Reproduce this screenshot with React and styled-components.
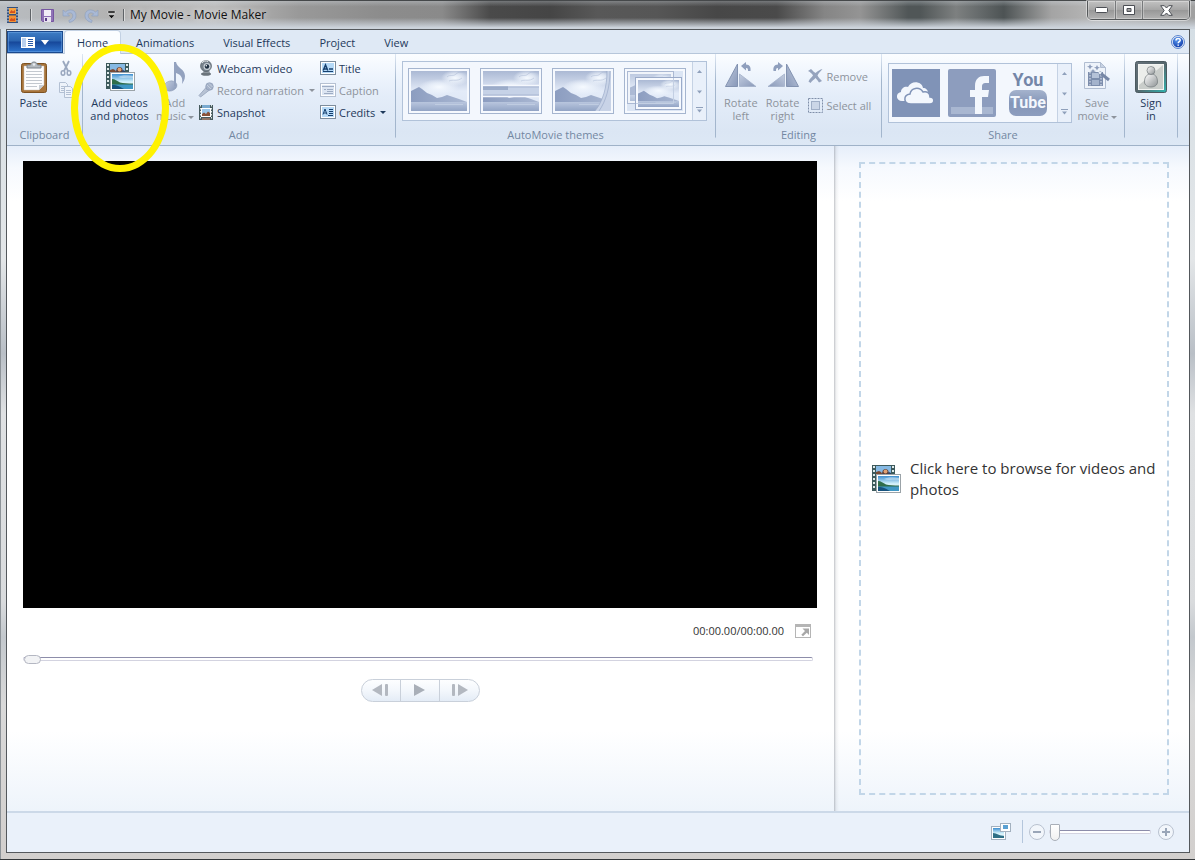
import React from 'react'
import styled, { createGlobalStyle, css } from 'styled-components'

const GlobalStyle = createGlobalStyle`
  * {
    box-sizing: border-box;
  }
  body {
    margin: 0;
    background: #c9cdd1;
    font-family: 'Open Sans', 'Noto Sans', sans-serif;
    font-size: 11px;
    line-height: 13px;
    color: #1e395b;
  }
  button {
    font: inherit;
    color: inherit;
    background: none;
    border: 0;
    padding: 0;
  }
  svg {
    display: block;
    flex: none;
  }
`

const Window = styled.div`
  display: flex;
  flex-direction: column;
  min-height: 100vh;
  padding: 0 5px 7px 6px;
  border: solid #45484a;
  border-width: 1px 0 0;
  background:
    linear-gradient(#34373a, #34373a) bottom / 100% 1px no-repeat,
    linear-gradient(to right, #8d9398 0, #8d9398 1px, transparent 1px),
    linear-gradient(#d3dde4 0, #e3e6e8 30%, #b9bfc6 41%, #dfe1e3 48%, #d9dbdd 70%, #c3c8cd 74%, #d9d9d9 82%, #d2cfcd 100%);
`

/* title bar */

const TitleBar = styled.header`
  display: flex;
  justify-content: space-between;
  height: 28px;
  margin: 0 -5px 0 -6px;
  padding-left: 6px;
  background:
    linear-gradient(rgba(220, 228, 236, 0.3) 0, rgba(220, 228, 236, 0) 20%, rgba(205, 213, 221, 0) 60%, #ccd3db 95%),
    linear-gradient(
      to right,
      #b8bcc0 0, #b3b3b3 9%, #bdbdbd 18%, #999 25%, #8c8c8c 32%, #8a8a8a 37%,
      #4a4a4a 41%, #454545 46%, #585858 50%, #565656 55%, #474747 60%, #4a4a4a 65%, #858585 69%,
      #949494 72%, #505657 76%, #505657 77%, #7d8080 80%, #656a6b 82%, #4d5354 84%, #a4a4a4 88%, #b9b9b9 92%, #a0a0a0 100%
    );
`

const QuickAccess = styled.div`
  display: flex;
  align-items: center;
  gap: 6px;
  color: #111;
`

const QuickButton = styled.button`
  display: flex;
  align-items: center;
  justify-content: center;
  width: ${(p) => (p.$narrow ? 12 : 16)}px;
  height: 16px;
`

const Divider = styled.span`
  width: 1px;
  height: 12px;
  margin: ${(p) => (p.$wide ? '0 2px 0 5px' : '0')};
  background: #5f6367;
  box-shadow: 1px 0 0 rgba(255, 255, 255, 0.5);
`

const Title = styled.h1`
  margin: 0;
  font-size: 12px;
  font-weight: 400;
  line-height: 16px;
  text-shadow: 0 0 6px rgba(255, 255, 255, 0.8);
`

const CaptionButtons = styled.div`
  display: flex;
  align-self: flex-start;
  margin-right: 5px;
  border: 1px solid #55585a;
  border-top: 0;
  border-radius: 0 0 5px 5px;
  box-shadow: 0 0 0 1px rgba(255, 255, 255, 0.45);
  background: linear-gradient(#c2c2c2, #a5a5a5 50%, #979797 50%, #b2b2b2);
`

const CaptionButton = styled.button`
  display: flex;
  align-items: center;
  justify-content: center;
  width: ${(p) => (p.$wide ? 47 : 27)}px;
  height: 18px;
  box-shadow: inset 0 0 0 1px rgba(255, 255, 255, 0.3);

  & + & {
    border-left: 1px solid #77797b;
  }
`

const Client = styled.div`
  flex: 1;
  display: flex;
  flex-direction: column;
  border: 1px solid #54585c;
  background: #fff;
`

/* ribbon */

const TabBar = styled.nav`
  display: flex;
  align-items: flex-end;
  height: 24px;
  background: #dfe9f5;
  border-bottom: 1px solid #b6c6da;
  padding-right: 4px;
`

const FileButton = styled.button`
  display: flex;
  align-items: center;
  justify-content: center;
  gap: 6px;
  width: 56px;
  height: 22px;
  border: 1px solid #1b4a8e;
  background: linear-gradient(#3d7cc4 0, #2a64b0 45%, #16479a 50%, #2e74cc 100%);
  box-shadow: inset 0 0 0 1px rgba(120, 175, 235, 0.45);
  margin-right: 2px;
`

const Tab = styled.button`
  height: 23px;
  padding: 0 12px;
  margin: 0 5px -1px 0;

  ${(p) =>
    p.$active &&
    css`
      margin-right: 4px;
      background: #fbfdff;
      border-radius: 3px 3px 0 0;
      box-shadow: 0 0 0 1px #c3d1e3;
      clip-path: inset(-1px -1px 0 -1px);
    `}
`

const HelpButton = styled.button`
  margin: 0 0 4px auto;
`

const Ribbon = styled.div`
  display: flex;
  height: 92px;
  background: linear-gradient(#fbfdff 0, #eff5fd 22%, #e4edf9 45%, #dbe6f4 85%, #dde8f5 100%);
  border-bottom: 1px solid #9fb2c8;
`

const GroupBox = styled.section`
  display: flex;
  flex-direction: column;
  justify-content: space-between;
  width: ${(p) => p.$width}px;
  padding: 3px 4px;
  border-right: 1px solid;
  border-image: linear-gradient(#dfe8f4 0, #a3b6cd 30%, #a3b6cd 90%, transparent 92%) 1;
`

const GroupContent = styled.div`
  display: flex;
  align-items: flex-start;
  gap: ${(p) => p.$gap || 0}px;
  height: 68px;
`

const GroupLabel = styled.h2`
  margin: 0;
  font-size: 11px;
  font-weight: 400;
  line-height: 14px;
  text-align: center;
  color: #7387a2;
`

const LargeButton = styled.button`
  position: relative;
  display: flex;
  flex-direction: column;
  align-items: center;
  gap: 3px;
  width: ${(p) => p.$width}px;
  padding-top: 4px;
  white-space: nowrap;
  color: ${(p) => (p.disabled ? '#8d939c' : '#1e395b')};
`

const Highlight = styled.span`
  position: absolute;
  z-index: 2;
  top: -13px;
  left: 50%;
  width: 98px;
  height: 128px;
  margin-left: -49px;
  border: 7px solid #fff200;
  border-radius: 50%;
  pointer-events: none;
`

const SmallColumn = styled.div`
  display: flex;
  flex-direction: column;
  align-items: flex-start;
  gap: ${(p) => (p.$spread ? 7 : 0)}px;
  padding: ${(p) => (p.$spread ? '8px 0 0 5px' : '0')};
  width: ${(p) => p.$width}px;
`

const SmallButton = styled.button`
  display: flex;
  align-items: center;
  gap: 3px;
  height: 22px;
  white-space: nowrap;
  color: ${(p) => (p.disabled ? '#8d939c' : '#1e395b')};
`

const Arrow = styled.i`
  display: inline-block;
  vertical-align: middle;
  margin-left: 2px;
  border: 3px solid transparent;
  border-top-color: currentColor;
  border-bottom: 0;
`

const Gallery = styled.div`
  display: flex;
  margin: ${(p) => (p.$low ? 6 : 4)}px 0 0 2px;
  height: 60px;
  border: 1px solid #b1c2d9;
  background: #f3f7fd;
`

const GalleryItems = styled.div`
  display: flex;
  align-items: center;
  gap: ${(p) => (p.$roomy ? 10 : 8)}px;
  padding: ${(p) => (p.$roomy ? '0 6px 0 5px' : '0 5px 0 3px')};
`

const GalleryItem = styled.button`
  ${(p) =>
    p.$framed &&
    css`
      border: 1px solid #a5b5cf;
      padding: 2px;
      background: #f6f9fe;
    `}
`

const GalleryScroll = styled.div`
  display: flex;
  flex-direction: column;
  width: 14px;
  border-left: 1px solid #c5d2e4;
  background: #e9f0fa;

  button {
    flex: 1;
    display: flex;
    align-items: center;
    justify-content: center;
  }
`

/* workspace */

const Workspace = styled.main`
  flex: 1;
  display: grid;
  grid-template-columns: minmax(0, 1fr) 355px;
  background: linear-gradient(#e6eefa 0, #f6f9fe 22px, #fff 55px, #fff calc(100% - 80px), #eef4fb 100%);
`

const Preview = styled.section`
  padding: 15px 17px 0 16px;
`

const Screen = styled.div`
  aspect-ratio: 16 / 9;
  background: #000;
`

const TimeRow = styled.div`
  display: flex;
  align-items: center;
  justify-content: flex-end;
  gap: 11px;
  height: 20px;
  margin: 13px 6px 0 0;
  color: #333;
`

const seekThumb = css`
  width: 17px;
  height: 9px;
  margin-top: -3px;
  border: 1px solid #b4b7c2;
  border-radius: 5px;
  background: #f2f3f5;
`

const zoomThumb = css`
  width: 10px;
  height: 17px;
  margin-top: -7px;
  background: linear-gradient(#fff, #f1f1f1);
  border: 1px solid #a9afb8;
  border-radius: 1px 1px 5px 5px;
`

const Slider = styled.input`
  display: block;
  appearance: none;
  width: ${(p) => (p.$zoom ? '102px' : '100%')};
  height: 18px;
  margin: 0;
  background: none;

  &::-webkit-slider-runnable-track {
    height: 4px;
    border: 1px solid #d3d3e0;
    border-top-color: #8d8daa;
    border-radius: 2px;
    background: #fff;
  }
  &::-webkit-slider-thumb {
    appearance: none;
    ${(p) => (p.$zoom ? zoomThumb : seekThumb)}
  }
`

const SeekRow = styled.div`
  padding: 9px 4px 0 0;
`

const Transport = styled.div`
  display: flex;
  width: 119px;
  height: 23px;
  margin: 11px auto 0;
  border: 1px solid #c9d0da;
  border-radius: 12px;
  background: linear-gradient(#fdfeff, #f3f7fc 50%, #e4ecf6);
`

const TransportButton = styled.button`
  flex: 1;
  display: flex;
  align-items: center;
  justify-content: center;

  & + & {
    border-left: 1px solid #c9d0da;
  }
`

const Storyboard = styled.section`
  display: flex;
  padding: 16px 20px 16px 25px;
  background: linear-gradient(to right, rgba(120, 125, 135, 0.45) 0, rgba(120, 125, 135, 0.1) 2px, transparent 5px);
`

const DropZone = styled.button`
  flex: 1;
  display: flex;
  align-items: center;
  gap: 9px;
  padding: 0 10px;
  border: 2px dashed #c2d6e8;
  font-size: 15px;
  line-height: 21px;
  text-align: left;
  color: #333;
`

const StatusBar = styled.footer`
  display: flex;
  align-items: center;
  justify-content: flex-end;
  height: 41px;
  padding: 0 15px 2px;
  border-top: 2px solid #ccd9e8;
  background: #eaf1fa;
`

const StatusDivider = styled.span`
  width: 1px;
  height: 23px;
  margin: 0 6px 0 11px;
  background: #b4c6dc;
`

const RoundButton = styled.button`
  display: flex;
  align-items: center;
  justify-content: center;
  width: 16px;
  height: 16px;
  margin: ${(p) => (p.$end ? '0 0 0 7px' : '0 4px 0 0')};
  border: 1px solid #b9c2d0;
  border-radius: 50%;
  background: #f2f6fb;
`

/* icons */

const GradientSheet = styled.svg`
  position: absolute;
`

const SharedGradients = () => (
  <GradientSheet width="0" height="0" aria-hidden="true">
    <defs>
      <linearGradient id="sky" x1="0" y1="0" x2="0" y2="1">
        <stop offset="0" stopColor="#3f8fd0" />
        <stop offset="0.5" stopColor="#cdeefa" />
        <stop offset="0.7" stopColor="#e4f6fb" />
        <stop offset="1" stopColor="#3787b4" />
      </linearGradient>
      <linearGradient id="mutedSky" x1="0" y1="0" x2="0" y2="1">
        <stop offset="0" stopColor="#abb9d4" />
        <stop offset="0.5" stopColor="#e3ebf8" />
        <stop offset="1" stopColor="#dde6f5" />
      </linearGradient>
      <radialGradient id="mutedCloud">
        <stop offset="0" stopColor="#f6faff" />
        <stop offset="0.5" stopColor="#eef4fc" stopOpacity="0.7" />
        <stop offset="1" stopColor="#eef4fc" stopOpacity="0" />
      </radialGradient>
      <linearGradient id="mutedHill" x1="0" y1="0" x2="1" y2="0">
        <stop offset="0" stopColor="#8c9dc0" />
        <stop offset="1" stopColor="#a9b7d2" />
      </linearGradient>
      <linearGradient id="mutedWater" x1="0" y1="0" x2="0" y2="1">
        <stop offset="0" stopColor="#b9c6de" />
        <stop offset="1" stopColor="#92a4c5" />
      </linearGradient>
      <linearGradient id="steel" x1="0" y1="0" x2="1" y2="1">
        <stop offset="0" stopColor="#c3cde0" />
        <stop offset="1" stopColor="#8898b8" />
      </linearGradient>
      <linearGradient id="teal" x1="0" y1="0" x2="1" y2="1">
        <stop offset="0" stopColor="#66727a" />
        <stop offset="0.5" stopColor="#56666c" />
        <stop offset="1" stopColor="#2fb5b0" />
      </linearGradient>
      <linearGradient id="silver" x1="0" y1="0" x2="1" y2="1">
        <stop offset="0" stopColor="#fff" />
        <stop offset="1" stopColor="#8d9294" />
      </linearGradient>
      <radialGradient id="helpBlue" cx="0.4" cy="0.3" r="0.8">
        <stop offset="0" stopColor="#5c9cf0" />
        <stop offset="1" stopColor="#0b36a8" />
      </radialGradient>
    </defs>
  </GradientSheet>
)

const AppIcon = () => (
  <svg width="13" height="16" viewBox="0 0 13 16">
    <rect x="1" width="11" height="16" fill="#34507c" />
    <rect x="3" y="1" width="7" height="6" fill="#f6a545" />
    <rect x="3" y="8.500" width="7" height="6.500" fill="#f29236" />
    <path d="M4 5l1.500-2L7 4.500 9 3v3H4zM4 12.500l1.500-1.500L7 12l2-1v3H4z" fill="#d4521c" />
    <path d="M2 1v14M11 1v14" stroke="#dbe6f2" strokeDasharray="1.500 1.500" />
  </svg>
)

const SaveIcon = () => (
  <svg width="13" height="13" viewBox="0 0 13 13">
    <path d="M.5.5h12v12h-11l-1-1z" fill="#8f72b6" stroke="#7656a2" />
    <rect x="3" y="1" width="7" height="6" fill="#f1eef7" />
    <rect x="3" y="8" width="7" height="5" fill="#e7e2f0" />
    <rect x="4" y="9" width="2" height="3" fill="#5a3d87" />
  </svg>
)

const UndoIcon = ({ flip }) => (
  <svg width="15" height="15" viewBox="0 0 15 15">
    <g transform={flip ? 'translate(15 0) scale(-1 1)' : undefined}>
      <path
        d="M1 2v6h6.500L5.300 5.800C8 3.800 11 5 10.800 8c-.1 2-1.800 3.500-4 4.500l.7 2C11 13.500 14 11.500 14 7.500 14 2 8 0 3.400 4z"
        fill="#a9b9d6"
        stroke="#8c9dbc"
        strokeWidth="0.6"
      />
    </g>
  </svg>
)

const CustomizeIcon = () => (
  <svg width="9" height="8" viewBox="0 0 9 8">
    <path d="M1 0h7v2H1zM1 4h7L4.500 7.500z" fill="#111" stroke="#fff" strokeWidth="0.4" />
  </svg>
)

const FileIcon = () => (
  <svg width="14" height="11" viewBox="0 0 14 11">
    <rect width="14" height="11" fill="#fff" />
    <rect x="1" y="1" width="4" height="9" fill="#b9d0ee" />
    <path d="M7 2.500h5M7 4.500h5M7 6.500h5M7 8.500h5" stroke="#2a5ba8" />
  </svg>
)

const HelpIcon = () => (
  <svg width="14" height="14" viewBox="0 0 14 14">
    <circle cx="7" cy="7" r="6.400" fill="#fff" stroke="#4a78c8" />
    <circle cx="7" cy="7" r="5.200" fill="url(#helpBlue)" />
    <path d="M5 5.400c0-2.600 4.200-2.600 4.200-.2 0 1.500-2 1.500-2 3M7.200 9.400v1.400" fill="none" stroke="#fff" strokeWidth="1.500" />
  </svg>
)

const PasteIcon = () => (
  <svg width="26" height="32" viewBox="0 0 26 32">
    <rect x="0.500" y="2.500" width="25" height="29" rx="2" fill="#a8743a" stroke="#7d5222" />
    <path d="M3 5h20v19l-5 5H3z" fill="#fdfdfe" stroke="#c9c2b8" strokeWidth="0.500" />
    <path d="M18 29v-5h5z" fill="#c8cdd4" />
    <path d="M5 10.500h16M5 13.500h16M5 16.500h16M5 19.500h16M5 22.500h16M5 25.500h11" stroke="#c3c8cf" />
    <path d="M6 7V4h3.500C10 0 16 0 16.500 4H20v3z" fill="#b4bac0" stroke="#7a828a" />
    <circle cx="13" cy="3.500" r="1.200" fill="#e9edf0" />
  </svg>
)

const CutIcon = () => (
  <svg width="16" height="16" viewBox="0 0 16 16" fill="none" stroke="#9aa8bf">
    <path d="M5 1l5 10M11 1L6 11" strokeWidth="1.800" />
    <ellipse cx="5" cy="13" rx="1.800" ry="2.200" strokeWidth="1.500" />
    <ellipse cx="11" cy="13" rx="1.800" ry="2.200" strokeWidth="1.500" />
  </svg>
)

const CopyIcon = () => (
  <svg width="16" height="16" viewBox="0 0 16 16" fill="#eef3fa" stroke="#b3c0d3">
    <path d="M1.500.5h6l2 2v8h-8z" />
    <path d="M3 4.500h4M3 6.500h4M3 8.500h4" />
    <path d="M6.500 4.500h6l2 2v9h-8z" />
    <path d="M8 8.500h5M8 10.500h5M8 12.500h5" />
  </svg>
)

const MediaIcon = () => (
  <svg width="30" height="32" viewBox="0 0 30 32">
    <rect x="1" y="2" width="23" height="26" fill="#3d5a5c" />
    <path d="M3 3v24M22 3v24" stroke="#dfeaea" strokeWidth="2" strokeDasharray="2 2" />
    <rect x="5" y="3" width="15" height="9" fill="#86b9e3" />
    <path d="M5 12V9l3-1 2 1 2 3z" fill="#7a4a34" />
    <path d="M11 12c0-4 1-6 3.500-6S18 8 18 12z" fill="#5c3d36" />
    <circle cx="14.500" cy="8.500" r="2" fill="#e0a072" />
    <path d="M16 12l2-3 2 1v2z" fill="#2f4468" />
    <rect x="5.500" y="11.500" width="24" height="18" fill="#fff" stroke="#9ba3a8" />
    <rect x="7" y="13" width="21" height="15" fill="url(#sky)" />
    <path d="M13 16c4-2 9-2 15-1v2c-5-1-10 1-15-1z" fill="#fff" opacity="0.4" />
    <path d="M7 18c3 0 5 2 8 3.500 3 .8 8 1 13 1V24H7z" fill="#2f6d4a" />
    <path d="M7 23.500h21V28H7z" fill="#3f97c4" />
    <path d="M7 24c6 0 8 2 12 4H7z" fill="#17527e" />
  </svg>
)

const MusicIcon = () => (
  <svg width="24" height="32" viewBox="0 0 24 32">
    <ellipse cx="7.500" cy="25" rx="6.500" ry="5" fill="url(#steel)" stroke="#8998b4" strokeWidth="0.500" transform="rotate(-15 7.500 25)" />
    <path d="M11 1h2c1 6 9 7 9 14 0 4-2 6-3 8 1-7-1-9-6-11v13h-2z" fill="#93a2bf" />
  </svg>
)

const WebcamIcon = () => (
  <svg width="16" height="16" viewBox="0 0 16 16">
    <ellipse cx="8" cy="14" rx="5" ry="1.800" fill="#6b747c" />
    <path d="M6 10h5l1 3H5z" fill="#8c959d" />
    <circle cx="8" cy="6" r="5.500" fill="#77828c" stroke="#4b555e" strokeWidth="0.600" />
    <circle cx="9" cy="6.500" r="3.500" fill="#c6ced5" />
    <circle cx="9" cy="6.500" r="2.200" fill="#1e2f40" />
    <circle cx="8.300" cy="5.700" r="0.800" fill="#fff" />
    <path d="M4 3c1-2 4-2.500 6-1.500" stroke="#e5e9ec" fill="none" />
  </svg>
)

const MicIcon = () => (
  <svg width="16" height="16" viewBox="0 0 16 16">
    <path d="M1 13.500L8.500 5l3 3L2.500 15z" fill="#b7c2d4" stroke="#94a2ba" strokeWidth="0.800" />
    <circle cx="11.500" cy="4.500" r="3.800" fill="#a5b2c8" stroke="#8796b1" strokeWidth="0.600" />
    <path d="M9 3l4 4M11 1.500l3.500 3.500" stroke="#ccd5e3" strokeWidth="0.800" />
  </svg>
)

const SnapshotIcon = () => (
  <svg width="16" height="16" viewBox="0 0 16 16">
    <rect x="1" y="1" width="14" height="15" fill="#465a5e" />
    <path d="M2.500 1v15M13.500 1v15" stroke="#dbe5e6" strokeDasharray="1.500 1.500" />
    <rect x="4" y="1" width="8" height="3" fill="#79a9cf" />
    <rect x="3.500" y="4.500" width="9" height="8" fill="#9cc7ea" stroke="#fff" />
    <path d="M4 12v-2l2-1.500L8 10l2-2.500 2 1.500v3z" fill="#8a5238" />
    <rect x="4" y="14" width="8" height="2" fill="#8f7466" />
  </svg>
)

const TextCard = ({ kind }) => {
  const muted = kind === 'caption'
  return (
    <svg width="16" height="14" viewBox="0 0 16 14">
      <rect x="0.500" y="0.500" width="15" height="13" fill="#fff" stroke={muted ? '#b6c1d2' : '#7d8d9d'} />
      <rect x="2" y="2" width="12" height="10" fill={muted ? '#dce5f2' : '#b6daf8'} />
      {kind === 'title' && (
        <>
          <path d="M3.200 9.500L5.500 4l2.300 5.500M4 8h3M9 8h4" stroke="#17406e" strokeWidth="1.500" fill="none" />
          <path d="M3 10.500h10" stroke="#17406e" />
        </>
      )}
      {kind === 'credits' && (
        <path d="M3 9.500L5 4l2 5.500M3.700 8h2.600M9 4.500h4M9 6.500h4M9 8.500h4M8 10.500h5" stroke="#17406e" fill="none" />
      )}
      {muted && <path d="M2 3.500h12M4 6.500h2M7 6.500h6M4 10.500h9M7 8.500h6" stroke="#9eacc3" strokeWidth="1.200" />}
    </svg>
  )
}

const Landscape = () => (
  <>
    <rect width="56" height="40" fill="url(#mutedSky)" />
    <ellipse cx="44" cy="7" rx="14" ry="8" fill="url(#mutedCloud)" />
    <ellipse cx="28" cy="16" rx="20" ry="8" fill="url(#mutedCloud)" />
    <path d="M36 6c3-3 6 0 9-3s6-1 8-2M38 10c4-2 8 1 13-3" fill="none" stroke="#a9b8d4" opacity="0.500" />
    <path
      d="M0 20l4-2 4-2 3 2 5 4 5 2 5 3 5-1 5-2 6 2 6 2 8 3v3H0z"
      fill="url(#mutedHill)"
    />
    <path d="M0 31h56v9H0z" fill="url(#mutedWater)" />
    <path d="M24 33.500h28" stroke="#cbd6e8" strokeWidth="0.600" />
  </>
)

const ThemeThumb = ({ kind }) => (
  <svg width="56" height="40" viewBox="0 0 56 40">
    {kind !== 'zoom' && <Landscape />}
    {kind === 'split' && (
      <>
        <path d="M0 15h56v10H0z" fill="#c6d2e7" />
        <path d="M0 15h25v4H0z" fill="#9dadca" />
        <path d="M0 14.500h56M0 25.500h56" stroke="#f5f8fd" strokeWidth="1.500" />
        <path d="M0 16h56M0 24h56" stroke="#93a4c3" strokeWidth="0.600" />
      </>
    )}
    {kind === 'curl' && (
      <>
        <path d="M52 0c0 16-4 30-12 40h16V0z" fill="#c8d3e7" />
        <path d="M52 0c0 16-4 30-12 40M55 0c0 16-4 30-11 40" fill="none" stroke="#9babc8" strokeWidth="0.700" />
      </>
    )}
    {kind === 'zoom' && (
      <>
        <rect width="56" height="40" fill="#dbe5f4" />
        <g opacity="0.600">
          <rect x="0.500" y="0.500" width="46" height="32" fill="#fff" stroke="#8c9dbe" />
          <svg x="3" y="3" width="41" height="27" viewBox="0 0 56 40" preserveAspectRatio="none"><Landscape /></svg>
        </g>
        <rect x="8.500" y="6.500" width="46" height="32" fill="#f6f9fe" stroke="#9babc9" />
        <svg x="11" y="9" width="41" height="27" viewBox="0 0 56 40" preserveAspectRatio="none"><Landscape /></svg>
        <path d="M9 32.500h37.500V7" fill="none" stroke="#c3cfe3" />
      </>
    )}
  </svg>
)

const RotateIcon = ({ flip }) => (
  <svg width="32" height="32" viewBox="0 0 32 32">
    <g transform={flip ? 'translate(32 0) scale(-1 1)' : undefined} fill="url(#steel)">
      <path d="M12.500 3v22.500H.500z" stroke="#8393b1" />
      <path d="M14.500 13L31 25.500H14.500z" stroke="#a2b0c9" strokeWidth="0.800" />
      <path d="M16 5l5-4v2.500c4 0 5 3 4.500 6.500H23c0-2 0-3-2-3v2.500z" fill="#8f9fbd" />
    </g>
  </svg>
)

const RemoveIcon = () => (
  <svg width="15" height="16" viewBox="0 0 15 16">
    <path
      d="M0 3l3-2c2 2 3 3 4.500 4C10 3 12 1.500 14.500 1c-2 2.500-4 4-5 6.500 1 2 3 4 4.500 5.500L11 14.500C10 13 9 11.500 7.500 10 6 11.500 4 13 2.500 15L.5 13.500c1-2.500 3-4 4.500-6C4 5.500 2 4 0 3z"
      fill="#95a3bd"
    />
  </svg>
)

const SelectAllIcon = () => (
  <svg width="15" height="15" viewBox="0 0 15 15">
    <rect x="0.500" y="0.500" width="14" height="14" fill="none" stroke="#7f8ea9" strokeDasharray="2 1" />
    <rect x="3.500" y="3.500" width="8" height="8" fill="#cbd6e7" stroke="#a0afc7" />
  </svg>
)

const SkyDriveIcon = () => (
  <svg width="48" height="48" viewBox="0 0 48 48">
    <rect width="48" height="48" fill="#8093b7" />
    <path d="M10 32c-6 0-7-8-1-9 0-4 4-6 7-5 3-7 14-6 15 1 3 0 5 2 5 5v8z" fill="#f3f7fd" />
    <path d="M19 35c-8 0-8-9-1-10 1-6 9-8 13-2 4-1 7 1 7 5 5 0 5 7 0 7z" fill="#f3f7fd" stroke="#8093b7" strokeWidth="1.500" />
  </svg>
)

const FacebookIcon = () => (
  <svg width="48" height="48" viewBox="0 0 48 48">
    <rect width="48" height="48" rx="2" fill="#8d9dbe" />
    <rect x="3" y="38" width="42" height="7" fill="#a9b7d1" />
    <path d="M27 45V28h-5v-7h5v-4c0-7 4-10 9-10h5v7h-3c-3 0-4 1-4 4v3h7l-1 7h-6v17z" fill="#f3f7fd" />
  </svg>
)

const YouTubeBadge = styled.span`
  display: flex;
  flex-direction: column;
  align-items: center;
  width: 48px;
  height: 48px;
  font-family: 'Roboto', sans-serif;
  font-size: 18px;
  font-weight: 700;
  line-height: 21px;
  color: #7486a8;
`

const YouTubeTube = styled.span`
  width: 38px;
  height: 26px;
  border-radius: 7px;
  font-size: 16px;
  line-height: 26px;
  color: #f3f7fd;
  background: linear-gradient(#a5b3cd, #8496b8 50%, #8d9dbe);
`

const SaveMovieIcon = () => (
  <svg width="28" height="32" viewBox="0 0 28 32">
    <path d="M1.500 1.500h16l5 5v21h-21z" fill="#eef3fa" stroke="#b0bdd1" />
    <path d="M17.500 1.500v5h5z" fill="#c7d2e3" stroke="#b0bdd1" />
    <rect x="5" y="11" width="15" height="14" fill="#7c8dac" />
    <path d="M7 11v14M18 11v14" stroke="#e4ebf5" strokeDasharray="1.500 1.500" />
    <rect x="9" y="12" width="7" height="5" fill="#b5c2d8" />
    <rect x="9" y="19" width="7" height="5" fill="#a4b3cc" />
    <path d="M7 3l1 2 2 .5-2 1-1 2-1-2-2-1 2-.5zM14 4l1 2 2 .5-2 1-1 2-1-2-2-1 2-.5zM10 8l1 1.500 2 .5-2 1-1 1.500L9 11l-2-1 2-.5z" fill="#8e9dba" />
    <path d="M16 11l10 8" stroke="#7687a6" strokeWidth="3" />
    <path d="M16 11l2 1.600" stroke="#e6edf6" strokeWidth="2.500" />
  </svg>
)

const SignInIcon = () => (
  <svg width="32" height="32" viewBox="0 0 32 32">
    <rect x="0.500" y="0.500" width="31" height="31" rx="2" fill="url(#teal)" stroke="#4c5a60" />
    <rect x="3" y="3" width="26" height="26" fill="#f4f5f3" />
    <rect x="4" y="4" width="24" height="24" fill="#c9cdca" />
    <path d="M4 4h24L4 24z" fill="#eceeeb" />
    <path d="M9.500 21c0-6 3-8 6.500-8s6.500 2 6.500 8c0 3-3 5-6.500 5s-6.500-2-6.500-5z" fill="url(#silver)" stroke="#71787b" strokeWidth="0.700" />
    <circle cx="16" cy="9.500" r="4" fill="url(#silver)" stroke="#71787b" strokeWidth="0.700" />
  </svg>
)

const FullScreenIcon = () => (
  <svg width="16" height="14" viewBox="0 0 16 14">
    <rect x="0.500" y="0.500" width="15" height="13" fill="#fff" stroke="#b5b5b5" />
    <path d="M0 0h16v3H0z" fill="#b5b5b5" />
    <path d="M7.500 4.500H14V11l-2.200-2.200L8 12.300 6.300 10.700 10 7z" fill="#a8a8a8" />
  </svg>
)

const StepIcon = ({ forward }) => (
  <svg width="17" height="12" viewBox="0 0 17 12">
    <g transform={forward ? 'translate(17 0) scale(-1 1)' : undefined} fill="#b3b8c0">
      <path d="M0 6l10-6v12z" />
      <rect x="13" width="3" height="12" rx="1" />
    </g>
  </svg>
)

const PlayIcon = () => (
  <svg width="11" height="12" viewBox="0 0 11 12">
    <path d="M0 0l11 6-11 6z" fill="#a9afb8" />
  </svg>
)

const ViewIcon = () => (
  <svg width="20" height="17" viewBox="0 0 20 17">
    <rect x="0.500" y="3.500" width="14" height="13" fill="#fff" stroke="#a3b1bf" />
    <rect x="2" y="5" width="11" height="10" fill="url(#sky)" />
    <path d="M2 10c4 0 6 3 11 3v2H2z" fill="#2e6f86" />
    <rect x="9.500" y="0.500" width="10" height="8" fill="#fff" stroke="#a3b1bf" />
    <rect x="12" y="2" width="5" height="4" fill="#5ba1d3" />
  </svg>
)

const MinimizeIcon = () => (
  <svg width="13" height="6" viewBox="0 0 13 6">
    <rect x="0.500" y="0.500" width="12" height="5" rx="1" fill="#fff" stroke="#4c4f55" />
  </svg>
)

const MaximizeIcon = () => (
  <svg width="12" height="10" viewBox="0 0 12 10">
    <path d="M.500.500h11v9H.500zM4 3.500v3h4v-3z" fill="#fff" fillRule="evenodd" stroke="#4c4f55" />
  </svg>
)

const CloseIcon = () => (
  <svg width="13" height="11" viewBox="0 0 13 11">
    <path d="M.7.7h3.600L6.500 3 8.700.7h3.600L8.800 5.500l3.500 4.800H8.700L6.500 8l-2.200 2.300H.7l3.500-4.800z" fill="#fff" stroke="#4c4f55" />
  </svg>
)

const ScrollArrow = ({ up, bar }) => (
  <svg width="7" height="6" viewBox="0 0 7 6">
    {bar && <path d="M0 .500h7" stroke="#8fa0bb" />}
    <path d={up ? 'M1 4h5L3.500 1z' : 'M1 2.500h5l-2.500 3z'} fill="#8fa0bb" />
  </svg>
)

const Group = ({ label, width, gap, children }) => (
  <GroupBox $width={width}>
    <GroupContent $gap={gap}>{children}</GroupContent>
    {label && <GroupLabel>{label}</GroupLabel>}
  </GroupBox>
)

const Scroller = () => (
  <GalleryScroll>
    <button aria-label="Scroll up"><ScrollArrow up /></button>
    <button aria-label="Scroll down"><ScrollArrow /></button>
    <button aria-label="More"><ScrollArrow bar /></button>
  </GalleryScroll>
)

const themes = ['plain', 'split', 'curl', 'zoom']
const tabs = ['Home', 'Animations', 'Visual Effects', 'Project', 'View']

const App = () => (
  <>
    <GlobalStyle />
    <SharedGradients />
    <Window>
      <TitleBar>
        <QuickAccess>
          <AppIcon />
          <Divider $wide />
          <QuickButton aria-label="Save"><SaveIcon /></QuickButton>
          <QuickButton aria-label="Undo"><UndoIcon /></QuickButton>
          <QuickButton aria-label="Redo"><UndoIcon flip /></QuickButton>
          <QuickButton $narrow aria-label="Customize"><CustomizeIcon /></QuickButton>
          <Divider />
          <Title>My Movie - Movie Maker</Title>
        </QuickAccess>
        <CaptionButtons>
          <CaptionButton aria-label="Minimize"><MinimizeIcon /></CaptionButton>
          <CaptionButton aria-label="Maximize"><MaximizeIcon /></CaptionButton>
          <CaptionButton $wide aria-label="Close"><CloseIcon /></CaptionButton>
        </CaptionButtons>
      </TitleBar>

      <Client>
        <TabBar>
          <FileButton aria-label="File">
            <FileIcon />
            <svg width="8" height="5" viewBox="0 0 8 5"><path d="M0 0h8L4 5z" fill="#fff" /></svg>
          </FileButton>
          {tabs.map((name, i) => (
            <Tab key={name} $active={i === 0}>{name}</Tab>
          ))}
          <HelpButton aria-label="Help"><HelpIcon /></HelpButton>
        </TabBar>

        <Ribbon>
          <Group label="Clipboard" width={76} gap={2}>
            <LargeButton $width={45}><PasteIcon />Paste</LargeButton>
            <SmallColumn $width={20}>
              <SmallButton disabled aria-label="Cut"><CutIcon /></SmallButton>
              <SmallButton disabled aria-label="Copy"><CopyIcon /></SmallButton>
            </SmallColumn>
          </Group>

          <Group label="Add" width={313} gap={4}>
            <LargeButton $width={65}>
              <MediaIcon />
              <span>Add videos<br />and photos</span>
              <Highlight />
            </LargeButton>
            <LargeButton $width={38} disabled>
              <MusicIcon />
              <span>Add<br />music<Arrow /></span>
            </LargeButton>
            <SmallColumn $width={118}>
              <SmallButton><WebcamIcon />Webcam video</SmallButton>
              <SmallButton disabled><MicIcon />Record narration<Arrow /></SmallButton>
              <SmallButton><SnapshotIcon />Snapshot</SmallButton>
            </SmallColumn>
            <SmallColumn $width={70}>
              <SmallButton><TextCard kind="title" />Title</SmallButton>
              <SmallButton disabled><TextCard kind="caption" />Caption</SmallButton>
              <SmallButton><TextCard kind="credits" />Credits<Arrow /></SmallButton>
            </SmallColumn>
          </Group>

          <Group label="AutoMovie themes" width={320}>
            <Gallery>
              <GalleryItems $roomy>
                {themes.map((kind) => (
                  <GalleryItem key={kind} $framed aria-label={kind}><ThemeThumb kind={kind} /></GalleryItem>
                ))}
              </GalleryItems>
              <Scroller />
            </Gallery>
          </Group>

          <Group label="Editing" width={166}>
            <LargeButton $width={42} disabled><RotateIcon /><span>Rotate<br />left</span></LargeButton>
            <LargeButton $width={42} disabled><RotateIcon flip /><span>Rotate<br />right</span></LargeButton>
            <SmallColumn $spread $width={74}>
              <SmallButton disabled><RemoveIcon />Remove</SmallButton>
              <SmallButton disabled><SelectAllIcon />Select all</SmallButton>
            </SmallColumn>
          </Group>

          <Group label="Share" width={243} gap={4}>
            <Gallery $low>
              <GalleryItems>
                <GalleryItem aria-label="SkyDrive"><SkyDriveIcon /></GalleryItem>
                <GalleryItem aria-label="Facebook"><FacebookIcon /></GalleryItem>
                <GalleryItem>
                  <YouTubeBadge>You<YouTubeTube>Tube</YouTubeTube></YouTubeBadge>
                </GalleryItem>
              </GalleryItems>
              <Scroller />
            </Gallery>
            <LargeButton $width={42} disabled>
              <SaveMovieIcon />
              <span>Save<br />movie<Arrow /></span>
            </LargeButton>
          </Group>

          <Group width={53}>
            <LargeButton $width={44}><SignInIcon /><span>Sign<br />in</span></LargeButton>
          </Group>
        </Ribbon>

        <Workspace>
          <Preview>
            <Screen />
            <TimeRow>
              <span>00:00.00/00:00.00</span>
              <button aria-label="Full screen"><FullScreenIcon /></button>
            </TimeRow>
            <SeekRow>
              <Slider type="range" min="0" max="100" defaultValue="0" aria-label="Seek" />
            </SeekRow>
            <Transport>
              <TransportButton aria-label="Previous frame"><StepIcon /></TransportButton>
              <TransportButton aria-label="Play"><PlayIcon /></TransportButton>
              <TransportButton aria-label="Next frame"><StepIcon forward /></TransportButton>
            </Transport>
          </Preview>
          <Storyboard>
            <DropZone>
              <MediaIcon />
              <span>Click here to browse for videos and photos</span>
            </DropZone>
          </Storyboard>
        </Workspace>

        <StatusBar>
          <button aria-label="Change view"><ViewIcon /></button>
          <StatusDivider />
          <RoundButton aria-label="Zoom out">
            <svg width="8" height="2" viewBox="0 0 8 2"><path d="M0 1h8" stroke="#9aa6b8" strokeWidth="2" /></svg>
          </RoundButton>
          <Slider $zoom type="range" min="0" max="100" defaultValue="0" aria-label="Zoom time scale" />
          <RoundButton $end aria-label="Zoom in">
            <svg width="8" height="8" viewBox="0 0 8 8"><path d="M0 4h8M4 0v8" stroke="#9aa6b8" strokeWidth="2" /></svg>
          </RoundButton>
        </StatusBar>
      </Client>
    </Window>
  </>
)

export default App
